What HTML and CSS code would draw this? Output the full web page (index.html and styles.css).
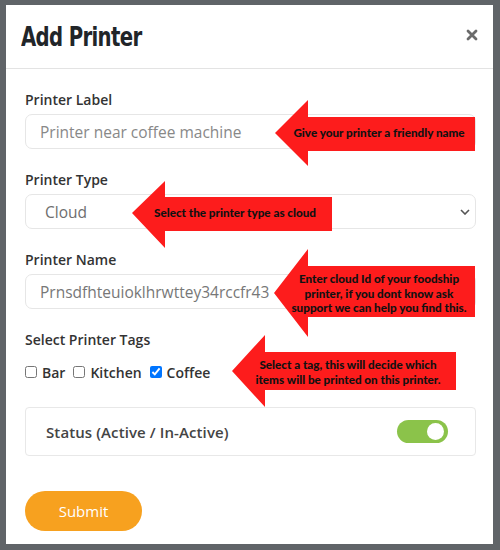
FILE: index.html
```html
<!DOCTYPE html>
<html>
<head>
<meta charset="utf-8">
<link rel="stylesheet" href="styles.css">
</head>
<body>
<div class="modal">
  <div class="modal-header">
    <h1 class="title">Add Printer</h1>
    <svg class="close" width="12" height="12" viewBox="0 0 12 12"><path d="M2 2L10 10M10 2L2 10" stroke="#6b6b6b" stroke-width="2.8" stroke-linecap="round"/></svg>
  </div>
  <div class="modal-body">
    <label class="field-label">Printer Label</label>
    <input class="control" type="text" placeholder="Printer near coffee machine">

    <label class="field-label">Printer Type</label>
    <div class="select-wrap">
      <div class="control select">Cloud</div>
      <svg class="chevron" width="10" height="6" viewBox="0 0 10 6"><path d="M1 1L5 5L9 1" fill="none" stroke="#555" stroke-width="1.6"/></svg>
    </div>

    <label class="field-label">Printer Name</label>
    <input class="control" type="text" value="Prnsdfhteuioklhrwttey34rccfr43">

    <label class="field-label">Select Printer Tags</label>
    <div class="tags">
      <label class="tag"><input type="checkbox">Bar</label>
      <label class="tag"><input type="checkbox">Kitchen</label>
      <label class="tag"><input type="checkbox" checked>Coffee</label>
    </div>

    <div class="status">
      <span>Status (Active / In-Active)</span>
      <div class="toggle"><div class="knob"></div></div>
    </div>

    <button class="submit">Submit</button>
  </div>
</div>

<div class="note note1">
  <svg width="200" height="66" viewBox="0 0 200 66"><polygon points="0,33 33,0 33,17 200,17 200,51 33,51 33,66" fill="#fd1c1c"/></svg>
  <div class="note-text">Give your printer a friendly name</div>
</div>
<div class="note note2">
  <svg width="200" height="67" viewBox="0 0 200 67"><polygon points="0,32 33,0 33,16 200,16 200,50 33,50 33,67" fill="#fd1c1c"/></svg>
  <div class="note-text">Select the printer type as cloud</div>
</div>
<div class="note note3">
  <svg width="201" height="88" viewBox="0 0 201 88"><polygon points="0,44 34,0 34,17 201,17 201,68 34,68 34,88" fill="#fd1c1c"/></svg>
  <div class="note-text">Enter cloud Id of your foodship<br>printer, if you dont know ask<br>support we can help you find this.</div>
</div>
<div class="note note4">
  <svg width="224" height="72" viewBox="0 0 224 72"><polygon points="0,36 33,0 33,17 224,17 224,55 33,55 33,72" fill="#fd1c1c"/></svg>
  <div class="note-text">Select a tag, this will decide which<br>items will be printed on this printer.</div>
</div>
</body>
</html>
```
FILE: styles.css
```css
html, body {
  margin: 0;
  padding: 0;
}
body {
  background: #606468;
  width: 500px;
  height: 550px;
  position: relative;
  overflow: hidden;
  font-family: "Open Sans", "DejaVu Sans", sans-serif;
}
.modal {
  position: absolute;
  left: 6px;
  top: 5px;
  width: 487px;
  height: 539px;
  background: #fff;
  box-sizing: border-box;
}
.modal-header {
  height: 64px;
  border-bottom: 1px solid #e3e3e3;
  display: flex;
  align-items: center;
  justify-content: space-between;
  padding: 0 15px 0 15px;
  box-sizing: border-box;
}
.title {
  margin: 0;
  font-family: "DejaVu Sans", sans-serif;
  font-stretch: condensed;
  font-weight: 700;
  font-size: 27px;
  color: #212529;
  letter-spacing: -0.8px;
  transform: scaleX(0.81);
  transform-origin: left center;
}
.close {
  margin-top: -4px;
}
.modal-body {
  padding: 0 17px 0 19px;
  display: flex;
  flex-direction: column;
  align-items: stretch;
}
.field-label {
  display: block;
  font-size: 14px;
  line-height: 20px;
  font-weight: 600;
  color: #333;
  margin-top: 21px;
  margin-bottom: 4px;
}
.control {
  height: 35px;
  box-sizing: border-box;
  border: 1px solid #e6e6e6;
  border-radius: 7px;
  padding: 0 14px;
  font-family: inherit;
  font-size: 15.5px;
  color: #777;
  outline: none;
  width: 100%;
}
.control::placeholder {
  color: #888;
}
.select-wrap {
  position: relative;
}
.select {
  display: flex;
  align-items: center;
  padding-left: 19px;
  color: #6e6e6e;
}
.chevron {
  position: absolute;
  right: 6px;
  top: 15px;
}
.tags {
  display: flex;
  align-items: center;
  margin-top: 8px;
  height: 20px;
}
.tag {
  display: flex;
  align-items: center;
  font-size: 14px;
  font-weight: 600;
  color: #333;
  margin-right: 8px;
}
.tag input {
  margin: 0 5px 0 0;
  width: 12px;
  height: 12px;
}
.status {
  margin-top: 25px;
  height: 49px;
  box-sizing: border-box;
  border: 1px solid #e8e8e8;
  border-radius: 4px;
  display: flex;
  align-items: center;
  justify-content: space-between;
  padding: 0 27px 0 20px;
  font-size: 15px;
  letter-spacing: 0.1px;
  font-weight: 600;
  color: #444;
}
.toggle {
  width: 51px;
  height: 23px;
  border-radius: 12px;
  background: #8bc34a;
  position: relative;
}
.knob {
  position: absolute;
  right: 4px;
  top: 3px;
  width: 17px;
  height: 17px;
  border-radius: 50%;
  background: #fff;
}
.submit {
  align-self: flex-start;
  margin-top: 35px;
  width: 117px;
  height: 40px;
  border: none;
  border-radius: 20px;
  background: #f7a11f;
  color: #fff;
  font-family: inherit;
  font-size: 15px;
  font-weight: 500;
}
.note {
  position: absolute;
}
.note svg {
  display: block;
}
.note-text {
  position: absolute;
  font-family: "Lato", "Open Sans", sans-serif;
  font-weight: 900;
  font-size: 11.7px;
  line-height: 14.5px;
  color: #111;
  text-align: center;
  white-space: nowrap;
}
.note1 { left: 275px; top: 100px; }
.note1 .note-text { left: 4px; width: 200px; top: 25px; }
.note2 { left: 132px; top: 181px; }
.note2 .note-text { left: 3px; width: 200px; top: 24px; }
.note3 { left: 274px; top: 249px; }
.note3 .note-text { left: 5px; width: 200px; top: 22px; }
.note4 { left: 232px; top: 335px; }
.note4 .note-text { left: 4px; width: 224px; top: 22px; }
```
